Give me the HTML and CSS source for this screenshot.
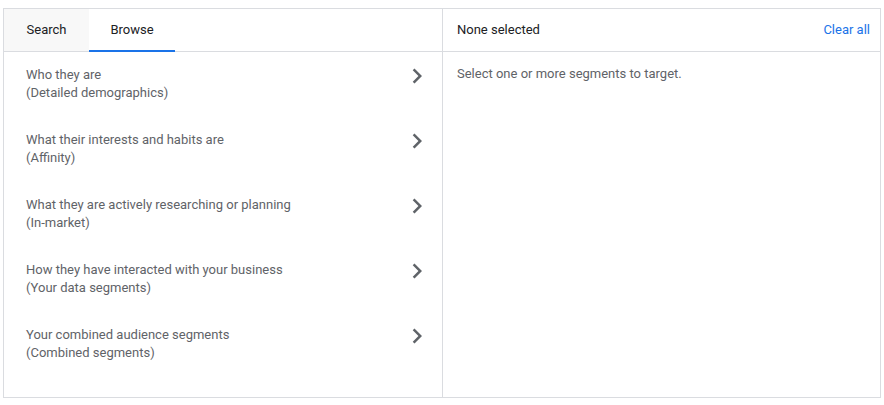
FILE: index.html
```html
<!DOCTYPE html>
<html>
<head>
<meta charset="utf-8">
<link rel="stylesheet" href="styles.css">
</head>
<body>
<div class="picker">
  <div class="pane left">
    <div class="tabs">
      <div class="tab search">Search</div>
      <div class="tab browse active">Browse</div>
    </div>
    <div class="list">
      <div class="row"><div class="text"><div>Who they are</div><div>(Detailed demographics)</div></div><svg class="chev" viewBox="0 0 24 24"><path d="M10 6L8.59 7.41 13.17 12l-4.58 4.59L10 18l6-6z"/></svg></div>
      <div class="row"><div class="text"><div>What their interests and habits are</div><div>(Affinity)</div></div><svg class="chev" viewBox="0 0 24 24"><path d="M10 6L8.59 7.41 13.17 12l-4.58 4.59L10 18l6-6z"/></svg></div>
      <div class="row"><div class="text"><div>What they are actively researching or planning</div><div>(In-market)</div></div><svg class="chev" viewBox="0 0 24 24"><path d="M10 6L8.59 7.41 13.17 12l-4.58 4.59L10 18l6-6z"/></svg></div>
      <div class="row"><div class="text"><div>How they have interacted with your business</div><div>(Your data segments)</div></div><svg class="chev" viewBox="0 0 24 24"><path d="M10 6L8.59 7.41 13.17 12l-4.58 4.59L10 18l6-6z"/></svg></div>
      <div class="row"><div class="text"><div>Your combined audience segments</div><div>(Combined segments)</div></div><svg class="chev" viewBox="0 0 24 24"><path d="M10 6L8.59 7.41 13.17 12l-4.58 4.59L10 18l6-6z"/></svg></div>
    </div>
  </div>
  <div class="pane right">
    <div class="rhead">
      <span class="title">None selected</span>
      <span class="clear">Clear all</span>
    </div>
    <div class="hint">Select one or more segments to target.</div>
  </div>
</div>
</body>
</html>
```

FILE: styles.css
```css
html, body {
  margin: 0;
  padding: 0;
  background: #fff;
}
body {
  font-family: Roboto, "Liberation Sans", Arial, sans-serif;
  font-size: 13px;
  color: #5f6368;
}
.picker {
  margin: 8px 0 0 3px;
  width: 876px;
  height: 388px;
  border: 1px solid #dadce0;
  display: flex;
}
.pane {
  display: flex;
  flex-direction: column;
}
.left {
  width: 438px;
  border-right: 1px solid #dadce0;
}
.right {
  flex: 1;
}
.tabs {
  display: flex;
  height: 42px;
  border-bottom: 1px solid #dadce0;
}
.tab {
  display: flex;
  align-items: center;
  justify-content: center;
  color: #202124;
  box-sizing: border-box;
  padding-bottom: 2px;
}
.tab.search {
  width: 85px;
  background: #f8f8f8;
}
.tab.browse {
  width: 86px;
  border-bottom: 2px solid #1a73e8;
  margin-bottom: -1px;
  padding-bottom: 1px;
}
.list {
  display: flex;
  flex-direction: column;
}
.row {
  height: 65px;
  box-sizing: border-box;
  padding: 14px 0 0 22px;
  display: flex;
  justify-content: space-between;
  align-items: flex-start;
  line-height: 18px;
}
.chev {
  width: 30px;
  height: 30px;
  fill: #5f6368;
  margin-top: -5px;
  margin-right: 10px;
}
.rhead {
  height: 43px;
  box-sizing: border-box;
  border-bottom: 1px solid #dadce0;
  display: flex;
  align-items: center;
  justify-content: space-between;
  padding: 0 10px 2px 14px;
}
.title {
  color: #202124;
}
.clear {
  color: #1a73e8;
}
.hint {
  padding: 13px 14px 0;
  line-height: 18px;
}
```
